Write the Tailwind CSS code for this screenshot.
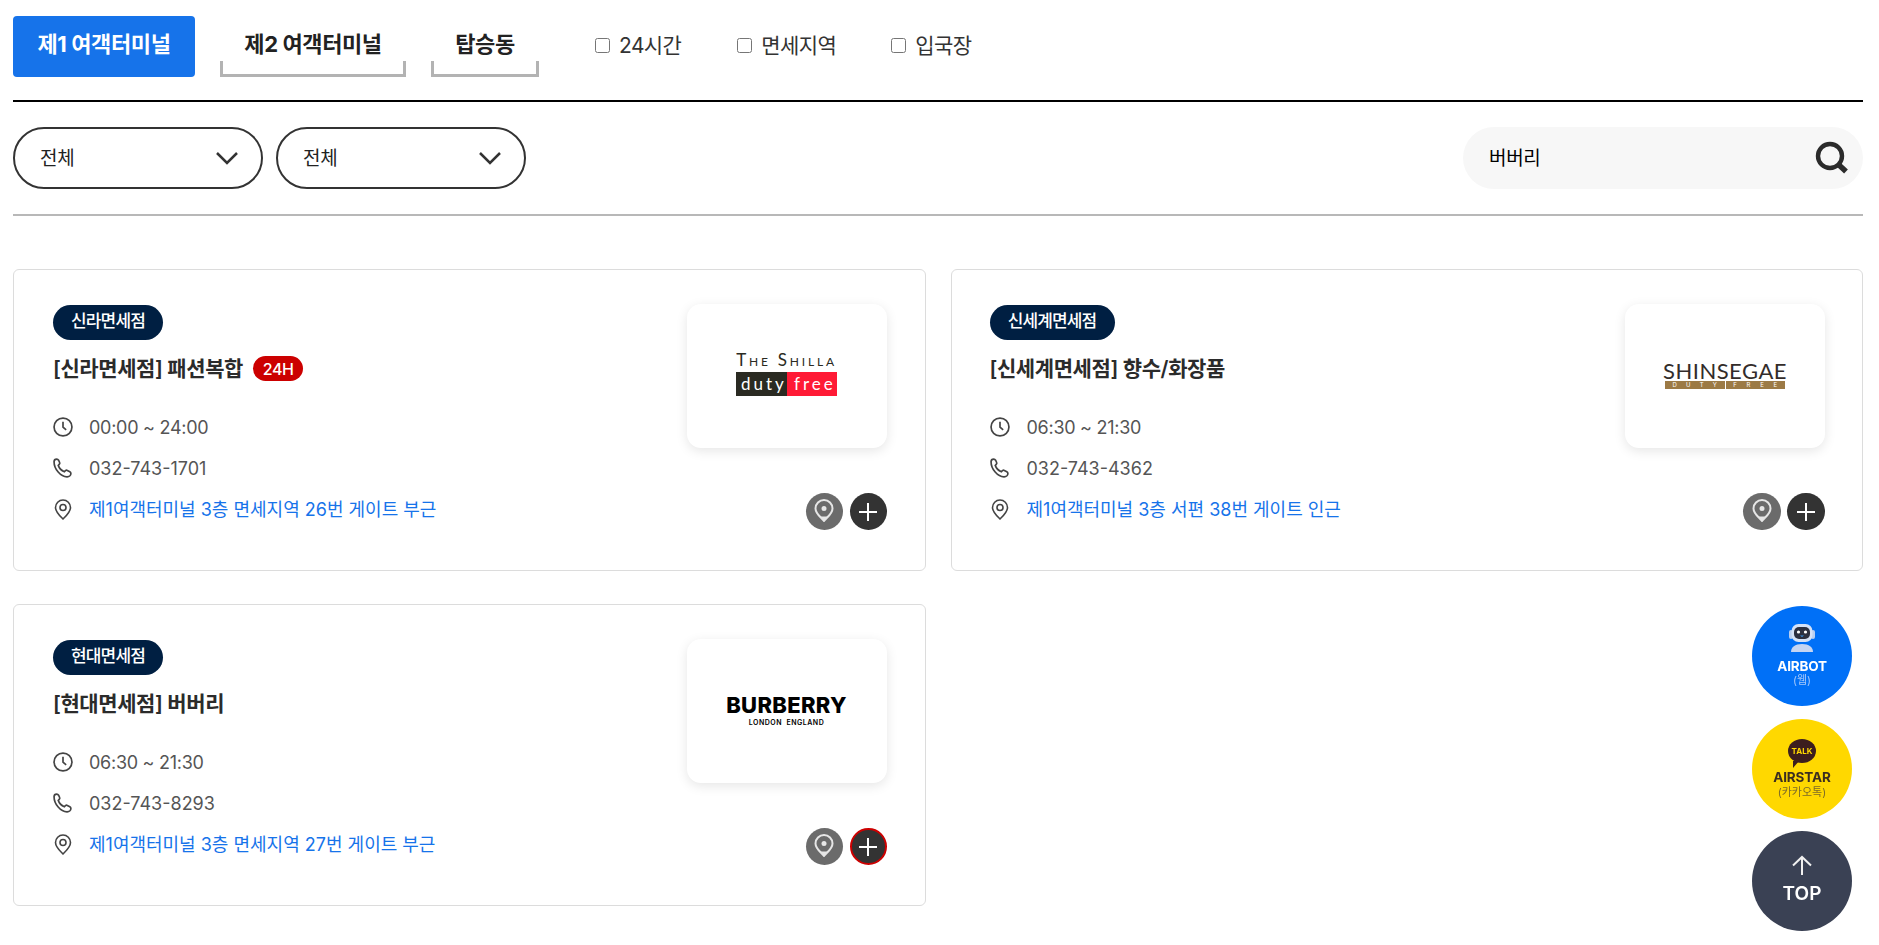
<!DOCTYPE html>
<html lang="ko">
<head>
<meta charset="UTF-8" />
<meta name="viewport" content="width=device-width, initial-scale=1.0" />
<title>면세점 검색</title>
<script src="https://cdn.jsdelivr.net/npm/@tailwindcss/browser@4"></script>
</head>
<body class="h-[945px] overflow-hidden bg-white pt-[16px] pl-[13px] pr-[16px] text-[#222] font-['Inter','Noto_Sans_CJK_KR',sans-serif]">

<!-- 터미널 탭 + 체크박스 -->
<div class="flex h-[61px]">
  <a class="flex w-[182px] items-center justify-center rounded-[4px] bg-[#1673ea] pb-[4px] text-[22px] font-bold tracking-[-0.4px] text-white">제1 여객터미널</a>
  <a class="ml-[25px] flex w-[186px] items-center justify-center pb-[4px] text-[22px] font-bold tracking-[-0.4px] relative">제2 여객터미널
    <span class="absolute bottom-0 left-0 right-0 h-[16px] border-x-[3px] border-b-[3px] border-[#b3b3b3]"></span>
  </a>
  <a class="ml-[25px] flex w-[108px] items-center justify-center pb-[4px] text-[22px] font-bold tracking-[-0.4px] relative">탑승동
    <span class="absolute bottom-0 left-0 right-0 h-[16px] border-x-[3px] border-b-[3px] border-[#b3b3b3]"></span>
  </a>
  <label class="ml-[56px] flex items-center gap-[9px] pb-[2px] text-[21px] tracking-[-0.6px] text-[#333]"><input type="checkbox" class="h-[15px] w-[15px]" />24시간</label>
  <label class="ml-[56px] flex items-center gap-[9px] pb-[2px] text-[21px] tracking-[-0.6px] text-[#333]"><input type="checkbox" class="h-[15px] w-[15px]" />면세지역</label>
  <label class="ml-[55px] flex items-center gap-[9px] pb-[2px] text-[21px] tracking-[-0.6px] text-[#333]"><input type="checkbox" class="h-[15px] w-[15px]" />입국장</label>
</div>
<div class="mt-[23px] h-[2px] bg-black"></div>

<!-- 필터 -->
<div class="mt-[25px] flex h-[62px] gap-[13px]">
  <div class="flex w-[250px] items-center justify-between rounded-full border-2 border-[#333] pl-[25px] pr-[22px] text-[19px] tracking-[-0.3px]"><span class="pt-[2px]">전체</span>
    <svg width="24" height="14" viewBox="0 0 24 14" fill="none" stroke="#333" stroke-width="2.5"><path d="M2 2l10 10L22 2"/></svg>
  </div>
  <div class="flex w-[250px] items-center justify-between rounded-full border-2 border-[#333] pl-[25px] pr-[22px] text-[19px] tracking-[-0.3px]"><span class="pt-[2px]">전체</span>
    <svg width="24" height="14" viewBox="0 0 24 14" fill="none" stroke="#333" stroke-width="2.5"><path d="M2 2l10 10L22 2"/></svg>
  </div>
  <div class="ml-auto flex w-[400px] items-center justify-between rounded-full bg-[#f7f7f7] pl-[26px] pr-[14px] text-[19px] tracking-[-0.3px] text-black"><span class="pt-[2px]">버버리</span>
    <svg width="34" height="34" viewBox="0 0 34 34" fill="none" stroke="#2b2b2b"><circle cx="15" cy="15" r="12" stroke-width="4.4"/><path d="M24 24l7 6.5" stroke-width="5.5"/></svg>
  </div>
</div>
<div class="mt-[25px] h-[2px] bg-[#b8b8b8]"></div>

<!-- 매장 카드 -->
<div class="mt-[53px] grid grid-cols-2 gap-x-[25px] gap-y-[33px]">

  <div class="flex h-[302px] justify-between rounded-[6px] border border-[#dcdcdc] pl-[39px] pr-[38px] pt-[34px]">
    <div>
      <span class="mt-[1px] inline-flex h-[35px] min-w-[110px] items-center justify-center rounded-full bg-[#001f42] pb-[1px] text-[17px] font-medium tracking-[-0.85px] text-white">신라면세점</span>
      <div class="mt-[16px] flex h-[25px] items-center text-[21px] font-semibold tracking-[-0.4px] text-[#2b2b2b]">[신라면세점] 패션복합
        <span class="ml-[10px] flex h-[25px] w-[50px] items-center justify-center rounded-full bg-[#cc0000] text-[16px] font-medium tracking-[-0.5px] text-white">24H</span>
      </div>
      <div class="mt-[34px] flex h-[24px] items-center gap-[16px] text-[18px] tracking-[-0.27px] text-[#555]">
        <svg width="20" height="20" viewBox="0 0 19 19" fill="none" stroke="#444" stroke-width="1.6"><circle cx="9.5" cy="9.5" r="8.5"/><path d="M9.5 4.5v5.2l3 2.6"/></svg>00:00 ~ 24:00
      </div>
      <div class="mt-[17px] flex h-[24px] items-center gap-[16px] text-[18px] text-[#555]">
        <svg width="20" height="20" viewBox="0 0 19 19" fill="none" stroke="#444" stroke-width="1.6"><path d="M1 3.5C1 2 2.3 1 3.6 1c.8 0 1.3.4 1.7 1.1l1 2.2c.3.7.1 1.3-.4 1.8l-.9.9c1 3 3 5 5.8 6l1-.9c.5-.5 1.2-.6 1.8-.3l2.4 1.2c.7.4 1 1 1 1.7 0 1.4-1.3 3.2-3.6 3.2C7.300 18 1 10.500 1 3.500z"/></svg>032-743-1701
      </div>
      <div class="mt-[17px] flex h-[24px] items-center gap-[16px] text-[18px] text-[#1673ea]">
        <svg width="20" height="21" viewBox="0 0 19 21" fill="none" stroke="#444" stroke-width="1.6"><path d="M9.500 20C6 16.500 2 13 2 8.500a7.500 7.500 0 0 1 15 0C17 13 13 16.500 9.500 20z"/><circle cx="9.500" cy="8.500" r="3"/></svg>제1여객터미널 3층 면세지역 26번 게이트 부근
      </div>
    </div>
    <div class="flex flex-col items-end">
      <div class="flex h-[144px] w-[200px] flex-col items-center justify-center rounded-[14px] bg-white pb-[5px] shadow-[0_3px_12px_rgba(0,0,0,0.1)]">
        <div class="font-['Lato',sans-serif] text-[17px] leading-[15px] tracking-[2.8px] text-[#2a2a22] [font-variant:small-caps]">The Shilla</div>
        <div class="mt-[5px] flex h-[24px] w-[101px] font-['Lato',sans-serif] text-[17px] leading-[23px] tracking-[3px] text-white">
          <span class="w-[51px] bg-[#2a2a22] pl-[5px]">duty</span><span class="w-[50px] bg-[#ff1a35] pl-[7px]">free</span>
        </div>
      </div>
      <div class="mt-[45px] flex gap-[7px]">
        <span class="flex h-[37px] w-[37px] items-start justify-center rounded-full bg-[#6b6b6b] pt-[6px]"><svg width="20" height="23" viewBox="0 0 20 23" fill="none" stroke="#e6e6e6" stroke-width="2"><path d="M10 22C7 18 1.500 15 1.500 9.500a8.500 8.500 0 0 1 17 0C18.500 15 13 18 10 22z"/><path d="M6 17.500h8L10 22z" fill="#e6e6e6" stroke="none"/><circle cx="10" cy="9.500" r="2.500" fill="#e6e6e6" stroke="none"/></svg></span>
        <span class="flex h-[37px] w-[37px] items-center justify-center rounded-full bg-[#333]"><svg width="20" height="20" viewBox="0 0 20 20" stroke="#fff" stroke-width="2"><path d="M10 1v18M1 10h18"/></svg></span>
      </div>
    </div>
  </div>

  <div class="flex h-[302px] justify-between rounded-[6px] border border-[#dcdcdc] pl-[38px] pr-[37px] pt-[34px]">
    <div>
      <span class="mt-[1px] inline-flex h-[35px] min-w-[125px] items-center justify-center rounded-full bg-[#001f42] pb-[1px] text-[17px] font-medium tracking-[-0.85px] text-white">신세계면세점</span>
      <div class="mt-[16px] flex h-[25px] items-center text-[21px] font-semibold tracking-[-0.4px] text-[#2b2b2b]">[신세계면세점] 향수/화장품</div>
      <div class="mt-[34px] flex h-[24px] items-center gap-[17px] text-[18px] tracking-[-0.27px] text-[#555]">
        <svg width="20" height="20" viewBox="0 0 19 19" fill="none" stroke="#444" stroke-width="1.6"><circle cx="9.5" cy="9.5" r="8.5"/><path d="M9.5 4.5v5.2l3 2.6"/></svg>06:30 ~ 21:30
      </div>
      <div class="mt-[17px] flex h-[24px] items-center gap-[17px] text-[18px] text-[#555]">
        <svg width="20" height="20" viewBox="0 0 19 19" fill="none" stroke="#444" stroke-width="1.6"><path d="M1 3.5C1 2 2.3 1 3.6 1c.8 0 1.3.4 1.7 1.1l1 2.2c.3.7.1 1.3-.4 1.8l-.9.9c1 3 3 5 5.8 6l1-.9c.5-.5 1.2-.6 1.8-.3l2.4 1.2c.7.4 1 1 1 1.7 0 1.4-1.3 3.2-3.6 3.2C7.300 18 1 10.500 1 3.500z"/></svg>032-743-4362
      </div>
      <div class="mt-[17px] flex h-[24px] items-center gap-[17px] text-[18px] text-[#1673ea]">
        <svg width="20" height="21" viewBox="0 0 19 21" fill="none" stroke="#444" stroke-width="1.6"><path d="M9.500 20C6 16.500 2 13 2 8.500a7.500 7.500 0 0 1 15 0C17 13 13 16.500 9.500 20z"/><circle cx="9.500" cy="8.500" r="3"/></svg>제1여객터미널 3층 서편 38번 게이트 인근
      </div>
    </div>
    <div class="flex flex-col items-end">
      <div class="flex h-[144px] w-[200px] flex-col items-center justify-center rounded-[14px] bg-white pb-[2px] shadow-[0_3px_12px_rgba(0,0,0,0.1)]">
        <div class="font-['Lato',sans-serif] text-[22px] leading-[18px] tracking-[0.5px] text-[#332c2a]">SHINSEGAE</div>
        <div class="mt-[1px] flex h-[8px] w-[120px] gap-[1px] text-[6px] leading-[8px] text-white">
          <span class="flex flex-1 justify-around bg-[#9c7a45] px-[3px]"><i class="not-italic">D</i><i class="not-italic">U</i><i class="not-italic">T</i><i class="not-italic">Y</i></span>
          <span class="flex flex-1 justify-around bg-[#9c7a45] px-[3px]"><i class="not-italic">F</i><i class="not-italic">R</i><i class="not-italic">E</i><i class="not-italic">E</i></span>
        </div>
      </div>
      <div class="mt-[45px] flex gap-[6px]">
        <span class="flex h-[37px] w-[38px] items-start justify-center rounded-full bg-[#6b6b6b] pt-[6px]"><svg width="20" height="23" viewBox="0 0 20 23" fill="none" stroke="#e6e6e6" stroke-width="2"><path d="M10 22C7 18 1.500 15 1.500 9.500a8.500 8.500 0 0 1 17 0C18.500 15 13 18 10 22z"/><path d="M6 17.500h8L10 22z" fill="#e6e6e6" stroke="none"/><circle cx="10" cy="9.500" r="2.500" fill="#e6e6e6" stroke="none"/></svg></span>
        <span class="flex h-[37px] w-[38px] items-center justify-center rounded-full bg-[#333]"><svg width="20" height="20" viewBox="0 0 20 20" stroke="#fff" stroke-width="2"><path d="M10 1v18M1 10h18"/></svg></span>
      </div>
    </div>
  </div>

  <div class="flex h-[302px] justify-between rounded-[6px] border border-[#dcdcdc] pl-[39px] pr-[38px] pt-[34px]">
    <div>
      <span class="mt-[1px] inline-flex h-[35px] min-w-[110px] items-center justify-center rounded-full bg-[#001f42] pb-[1px] text-[17px] font-medium tracking-[-0.85px] text-white">현대면세점</span>
      <div class="mt-[16px] flex h-[25px] items-center text-[21px] font-semibold tracking-[-0.4px] text-[#2b2b2b]">[현대면세점] 버버리</div>
      <div class="mt-[34px] flex h-[24px] items-center gap-[16px] text-[18px] tracking-[-0.27px] text-[#555]">
        <svg width="20" height="20" viewBox="0 0 19 19" fill="none" stroke="#444" stroke-width="1.6"><circle cx="9.5" cy="9.5" r="8.5"/><path d="M9.5 4.5v5.2l3 2.6"/></svg>06:30 ~ 21:30
      </div>
      <div class="mt-[17px] flex h-[24px] items-center gap-[16px] text-[18px] text-[#555]">
        <svg width="20" height="20" viewBox="0 0 19 19" fill="none" stroke="#444" stroke-width="1.6"><path d="M1 3.5C1 2 2.3 1 3.6 1c.8 0 1.3.4 1.7 1.1l1 2.2c.3.7.1 1.3-.4 1.8l-.9.9c1 3 3 5 5.8 6l1-.9c.5-.5 1.2-.6 1.8-.3l2.4 1.2c.7.4 1 1 1 1.7 0 1.4-1.3 3.2-3.6 3.2C7.300 18 1 10.500 1 3.500z"/></svg>032-743-8293
      </div>
      <div class="mt-[17px] flex h-[24px] items-center gap-[16px] text-[18px] text-[#1673ea]">
        <svg width="20" height="21" viewBox="0 0 19 21" fill="none" stroke="#444" stroke-width="1.6"><path d="M9.500 20C6 16.500 2 13 2 8.500a7.500 7.500 0 0 1 15 0C17 13 13 16.500 9.500 20z"/><circle cx="9.500" cy="8.500" r="3"/></svg>제1여객터미널 3층 면세지역 27번 게이트 부근
      </div>
    </div>
    <div class="flex flex-col items-end">
      <div class="flex h-[144px] w-[200px] flex-col items-center justify-center rounded-[14px] bg-white shadow-[0_3px_12px_rgba(0,0,0,0.1)]">
        <div class="font-['Inter',sans-serif] text-[22px] leading-[20px] font-extrabold tracking-[0.3px] text-black">BURBERRY</div>
        <div class="mt-[4px] font-['Inter',sans-serif] text-[7px] leading-[8px] font-semibold tracking-[0.5px] text-black">LONDON&nbsp; ENGLAND</div>
      </div>
      <div class="mt-[45px] flex gap-[7px]">
        <span class="flex h-[37px] w-[37px] items-start justify-center rounded-full bg-[#6b6b6b] pt-[6px]"><svg width="20" height="23" viewBox="0 0 20 23" fill="none" stroke="#e6e6e6" stroke-width="2"><path d="M10 22C7 18 1.500 15 1.500 9.500a8.500 8.500 0 0 1 17 0C18.500 15 13 18 10 22z"/><path d="M6 17.500h8L10 22z" fill="#e6e6e6" stroke="none"/><circle cx="10" cy="9.500" r="2.500" fill="#e6e6e6" stroke="none"/></svg></span>
        <span class="flex h-[37px] w-[37px] items-center justify-center rounded-full border-2 border-[#cc0000] bg-[#333]"><svg width="20" height="20" viewBox="0 0 20 20" stroke="#fff" stroke-width="2"><path d="M10 1v18M1 10h18"/></svg></span>
      </div>
    </div>
  </div>
</div>

<!-- 플로팅 버튼 -->
<div class="fixed left-[1752px] top-[606px] flex flex-col">
  <a class="flex h-[100px] w-[100px] flex-col items-center rounded-full bg-[#0070f7] pt-[17px] text-white">
    <svg width="28" height="29" viewBox="0 0 28 29">
      <rect x="1" y="7" width="4" height="9" rx="2" fill="#b9cff0"/><rect x="23" y="7" width="4" height="9" rx="2" fill="#b9cff0"/>
      <rect x="3.500" y="1" width="21" height="18" rx="7" fill="#d5e2f7"/>
      <rect x="6" y="4" width="16" height="12" rx="5" fill="#2c3040"/>
      <circle cx="10.500" cy="9" r="1.600" fill="#fff"/><circle cx="17.500" cy="9" r="1.600" fill="#fff"/>
      <path d="M12 12.500h4l-2 1.500z" fill="#3a9bf5"/>
      <path d="M3 29c0-5 4-8 11-8s11 3 11 8z" fill="#c5d5f2"/>
    </svg>
    <span class="mt-[6px] text-[13.5px] leading-[16px] font-bold tracking-[-0.2px]">AIRBOT</span>
    <span class="text-[11px] leading-[13px] text-[#a5c8fa]">(웹)</span>
  </a>
  <a class="mt-[13px] flex h-[100px] w-[100px] flex-col items-center rounded-full bg-[#ffd800] pt-[20px] text-[#3c2e20]">
    <span class="relative flex h-[24px] w-[28px] items-center justify-center rounded-[50%] bg-[#3c1e1e] text-[8px] font-bold text-[#ffd800]">TALK
      <span class="absolute bottom-[-5px] left-[5px] h-0 w-0 border-t-[7px] border-r-[6px] border-t-[#3c1e1e] border-r-transparent"></span>
    </span>
    <span class="mt-[6px] text-[13.5px] leading-[16px] font-bold tracking-[-0.1px]">AIRSTAR</span>
    <span class="mt-[1px] text-[11px] leading-[13px] text-[#7c6a28]">(카카오톡)</span>
  </a>
  <a class="mt-[12px] flex h-[100px] w-[100px] flex-col items-center rounded-full bg-[#3a4154] pt-[24px] text-white">
    <svg width="22" height="20" viewBox="0 0 22 20" fill="none" stroke="#f0f0f0" stroke-width="2"><path d="M11 20V2M2 10.500L11 2l9 8.500"/></svg>
    <span class="mt-[7px] text-[19px] leading-[24px] font-semibold">TOP</span>
  </a>
</div>

</body>
</html>
